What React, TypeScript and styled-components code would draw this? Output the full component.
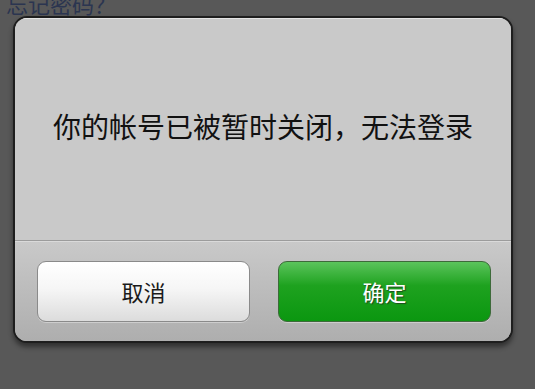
import React from 'react';
import styled, { createGlobalStyle } from 'styled-components';

const GlobalStyle = createGlobalStyle`
  html, body {
    margin: 0;
    padding: 0;
    background: #585858;
    font-family: "Noto Sans CJK SC", "Liberation Sans", sans-serif;
    overflow: hidden;
  }
`;

const Page = styled.div`
  width: 535px;
  height: 389px;
  background: #585858;
  position: relative;
  overflow: hidden;
`;

// 上一层页面露出来的一截链接
const ForgotLink = styled.div`
  position: absolute;
  left: 6px;
  top: -11px;
  font-size: 22px;
  line-height: 28px;
  color: #2b3550;
`;

const Shade = styled.div`
  width: 535px;
  height: 389px;
  display: flex;
  justify-content: flex-start;
  padding: 16px 0 0 13px;
  box-sizing: border-box;
`;

const Dialog = styled.div`
  width: 500px;
  height: 327px;
  box-sizing: border-box;
  border: 2px solid #1e1e1e;
  border-radius: 14px;
  overflow: hidden;
  display: flex;
  flex-direction: column;
  box-shadow: 0 4px 5px rgba(0, 0, 0, 0.45);
  background: #c9c9c9;
`;

const Message = styled.div`
  height: 223px;
  display: flex;
  align-items: center;
  justify-content: center;
  font-size: 28px;
  color: #111;
  background: #c9c9c9;
  border-top: 1px solid #e4e4e4;
  border-bottom: 1px solid #9c9c9c;
  box-sizing: border-box;
  padding-bottom: 8px;
`;

const Actions = styled.div`
  flex: 1;
  display: flex;
  gap: 28px;
  padding: 19px 20px 0 22px;
  border-top: 1px solid #dadada;
  background: linear-gradient(#c9c9c9, #aeaeae);
`;

const Button = styled.div<{ $primary?: boolean }>`
  flex: 1;
  height: 61px;
  box-sizing: border-box;
  border-radius: 9px;
  display: flex;
  align-items: center;
  justify-content: center;
  font-size: 22px;
  padding-bottom: 2px;
  border: 1.5px solid ${p => (p.$primary ? '#3d6a3a' : '#8a8a8a')};
  color: ${p => (p.$primary ? '#ffffff' : '#1a1a1a')};
  text-shadow: ${p => (p.$primary ? '1px 1px 1px #1f4a1d' : 'none')};
  background: ${p =>
    p.$primary
      ? 'linear-gradient(#5bc45c 0%, #1ea21f 40%, #0b9710 100%)'
      : 'linear-gradient(#ffffff 0%, #f6f6f6 45%, #dcdcdc 100%)'};
  box-shadow: 0 1px 0 rgba(255, 255, 255, 0.35);
`;

const App = () => {
  return (
    <Page>
      <GlobalStyle />
      <ForgotLink>忘记密码？</ForgotLink>
      <Shade>
        <Dialog>
          <Message>你的帐号已被暂时关闭，无法登录</Message>
          <Actions>
            <Button>取消</Button>
            <Button $primary>确定</Button>
          </Actions>
        </Dialog>
      </Shade>
    </Page>
  );
};

export default App;
